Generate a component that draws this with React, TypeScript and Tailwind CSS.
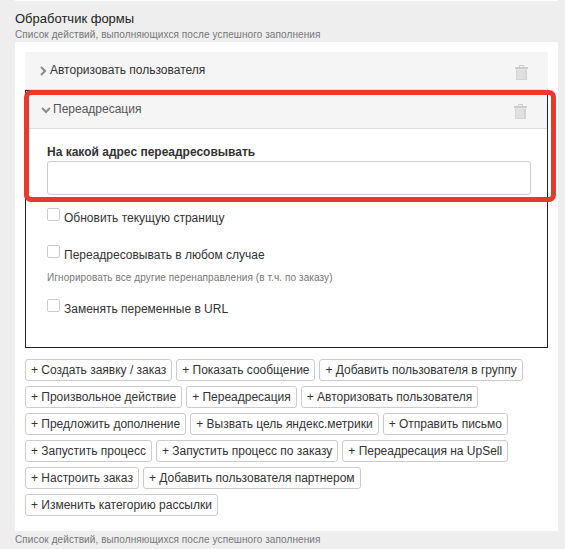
const ACTIONS = [
  'Создать заявку / заказ',
  'Показать сообщение',
  'Добавить пользователя в группу',
  'Произвольное действие',
  'Переадресация',
  'Авторизовать пользователя',
  'Предложить дополнение',
  'Вызвать цель яндекс.метрики',
  'Отправить письмо',
  'Запустить процесс',
  'Запустить процесс по заказу',
  'Переадресация на UpSell',
  'Настроить заказ',
  'Добавить пользователя партнером',
  'Изменить категорию рассылки',
];

function Trash() {
  return (
    <svg width="13" height="15" viewBox="0 0 13 15" className="mt-[3px] shrink-0">
      <path d="M4.5 2V0.5H8.5V2" fill="none" stroke="#cccccc" strokeWidth="1" />
      <rect x="0" y="2" width="13" height="2" fill="#cccccc" />
      <rect x="1" y="4.5" width="11" height="10.5" fill="#d4d4d4" />
      <path d="M3 5V14M5 5V14M7 5V14M9 5V14" stroke="#ececec" strokeWidth="1" />
    </svg>
  );
}

function Chevron({ open }: { open: boolean }) {
  return (
    <svg width="10" height="10" viewBox="0 0 10 10" className="shrink-0">
      <path
        d={open ? 'M1 3L5 7L9 3' : 'M1 1L5 5L1 9'}
        fill="none"
        stroke="#8a8a8a"
        strokeWidth="2"
      />
    </svg>
  );
}

function Check({ label }: { label: string }) {
  return (
    <div className="flex items-start gap-[4px] text-[12px] leading-[16px] text-[#333]">
      <span className="mt-[-1px] h-[13px] w-[13px] rounded-[2px] border border-[#ccc] bg-white" />
      <span className="mt-[1px]">{label}</span>
    </div>
  );
}

export default function App() {
  return (
    <div className="relative h-[549px] w-[565px] overflow-hidden bg-[#eeeeee] font-['Liberation_Sans',Arial,sans-serif]">
      <div className="ml-[15px] h-px w-[543px] bg-white" />
      <div className="ml-[15px] w-[543px]">
        <h3 className="mt-[10px] text-[13px] font-medium leading-[16px] text-[#222]">Обработчик формы</h3>
        <p className="mb-[1px] mt-[2px] text-[10px] leading-[12px] tracking-[0.09px] text-[#777]">
          Список действий, выполняющихся после успешного заполнения
        </p>

        <div className="h-[489px] bg-white px-[10px] pt-[10px]">
          <div className="flex h-[38px] items-center rounded-t-[3px] border-b border-[#ddd] bg-[#f5f5f5] pl-[15px] pr-[20px] text-[12px] text-[#333]">
            <Chevron open={false} />
            <span className="-mt-[2px] flex-1">Авторизовать пользователя</span>
            <Trash />
          </div>

          <div className="h-[258px] border border-[#222]">
            <div className="flex h-[38px] items-center border-b border-[#ddd] bg-[#f5f5f5] pl-[15px] pr-[20px] text-[12px] text-[#555]">
              <Chevron open />
              <span className="-mt-[2px] ml-[2px] flex-1">Переадресация</span>
              <Trash />
            </div>

            <div className="pl-[21px] pr-[16px]">
              <label className="mt-[15px] block text-[12px] font-bold leading-[16px] text-[#333]">
                На какой адрес переадресовывать
              </label>
              <input className="mt-[1px] block h-[34px] w-full rounded-[3px] border border-[#ccc] bg-white" />
              <div className="mt-[14px]">
                <Check label="Обновить текущую страницу" />
              </div>
              <div className="mt-[20px]">
                <Check label="Переадресовывать в любом случае" />
              </div>
              <p className="mt-[9px] text-[10px] leading-[12px] tracking-[0.09px] text-[#777]">
                Игнорировать все другие перенаправления (в т.ч. по заказу)
              </p>
              <div className="mt-[16px]">
                <Check label="Заменять переменные в URL" />
              </div>
            </div>
          </div>

          <div className="mt-[11px] flex flex-wrap gap-x-[4px] gap-y-[5px]">
            {ACTIONS.map((a) => (
              <button
                key={a}
                className="h-[22px] rounded-[3px] border border-[#ccc] bg-white px-[5px] text-[12px] leading-[20px] tracking-[-0.01px] text-[#333]"
              >
                + {a}
              </button>
            ))}
          </div>
        </div>

        <p className="mt-[3px] text-[10px] leading-[12px] tracking-[0.09px] text-[#777]">
          Список действий, выполняющихся после успешного заполнения
        </p>
      </div>

      {/* red annotation drawn over the screenshot */}
      <div className="absolute left-[24px] top-[90px] h-[112px] w-[532px] rounded-[7px] border-[5px] border-[#e8392f]" />
    </div>
  );
}
